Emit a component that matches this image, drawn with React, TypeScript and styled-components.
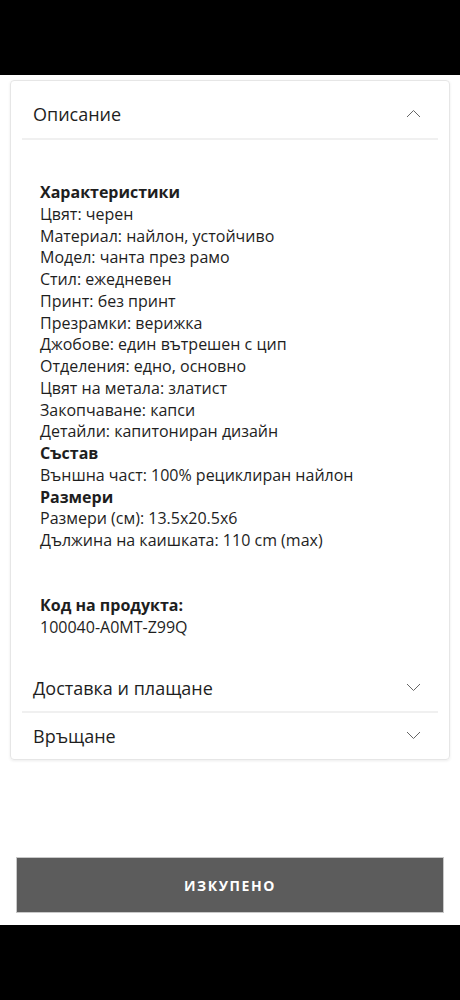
import styled, { createGlobalStyle } from "styled-components";

const GlobalStyle = createGlobalStyle`
    html, body {
        margin: 0;
        padding: 0;
        background: #ffffff;
    }
    body {
        font-family: "Open Sans", "Noto Sans", "Liberation Sans", sans-serif;
        color: #1e1e1e;
    }
`

const Page = styled.div`
    width: 460px;
    height: 1000px;
    display: flex;
    flex-direction: column;
    overflow: hidden;
`

const BlackBar = styled.div<{ $h: number }>`
    height: ${p => p.$h}px;
    background-color: #000000;
    flex-shrink: 0;
`

const Main = styled.main`
    flex: 1;
    padding: 5px 10px 0;
`

const Card = styled.section`
    border: 1px solid #e6e6e6;
    border-radius: 4px;
    box-shadow: 0 1px 3px rgba(0,0,0,.08);
    padding: 0 11px;
`

const Header = styled.div<{ $h: number; $top?: number; $line?: boolean }>`
    height: ${p => p.$h}px;
    padding: ${p => p.$top || 0}px 11px 0;
    display: flex;
    align-items: center;
    justify-content: space-between;
    border-bottom: ${p => p.$line ? "2px solid #f0f0f0" : "0"};
    box-sizing: border-box;
    >h2{
        margin: 0;
        font-size: 18px;
        font-weight: 400;
        color: #1e1e1e;
    }
    >svg{
        margin-right: 6px;
    }
`

const Body = styled.div`
    padding: 42px 18px 26px;
    font-size: 16px;
    line-height: 21.75px;
    color: #1e1e1e;
    >p{
        margin: 0;
    }
    >b{
        display: block;
        font-weight: 700;
    }
    .gap{
        height: 43.5px;
    }
`

const Footer = styled.div`
    padding: 0 16px 12px 16px;
`

const Button = styled.button`
    width: 428px;
    height: 56px;
    background-color: #5c5c5c;
    border: 1px solid #c8c8c8;
    color: #ffffff;
    font-family: "Open Sans", "Noto Sans", sans-serif;
    font-size: 14px;
    font-weight: 700;
    letter-spacing: 1.6px;
    display: block;
`

function Chevron({ up }: { up?: boolean }) {
    return <svg width="15" height="9" viewBox="0 0 15 9">
        <polyline
            points={up ? "1,8 7.5,1.5 14,8" : "1,1 7.5,7.5 14,1"}
            fill="none"
            stroke="#666"
            strokeWidth="1"
        />
    </svg>
}

const specs = [
    "Цвят: черен",
    "Материал: найлон, устойчиво",
    "Модел: чанта през рамо",
    "Стил: ежедневен",
    "Принт: без принт",
    "Презрамки: верижка",
    "Джобове: един вътрешен с цип",
    "Отделения: едно, основно",
    "Цвят на метала: златист",
    "Закопчаване: капси",
    "Детайли: капитониран дизайн",
]

function App() {
    return <Page>
        <GlobalStyle />
        <BlackBar $h={75} />
        <Main>
            <Card>
                <Header $h={59} $top={8} $line>
                    <h2>Описание</h2>
                    <Chevron up />
                </Header>
                <Body>
                    <b>Характеристики</b>
                    {specs.map(s => <p key={s}>{s}</p>)}
                    <b>Състав</b>
                    <p>Външна част: 100% рециклиран найлон</p>
                    <b>Размери</b>
                    <p>Размери (см): 13.5x20.5x6</p>
                    <p>Дължина на каишката: 110 cm (max)</p>
                    <div className="gap" />
                    <b>Код на продукта:</b>
                    <p>100040-A0MT-Z99Q</p>
                </Body>
                <Header $h={48} $line>
                    <h2>Доставка и плащане</h2>
                    <Chevron />
                </Header>
                <Header $h={46}>
                    <h2>Връщане</h2>
                    <Chevron />
                </Header>
            </Card>
        </Main>
        <Footer>
            <Button>ИЗКУПЕНО</Button>
        </Footer>
        <BlackBar $h={75} />
    </Page>
}

export default App;
